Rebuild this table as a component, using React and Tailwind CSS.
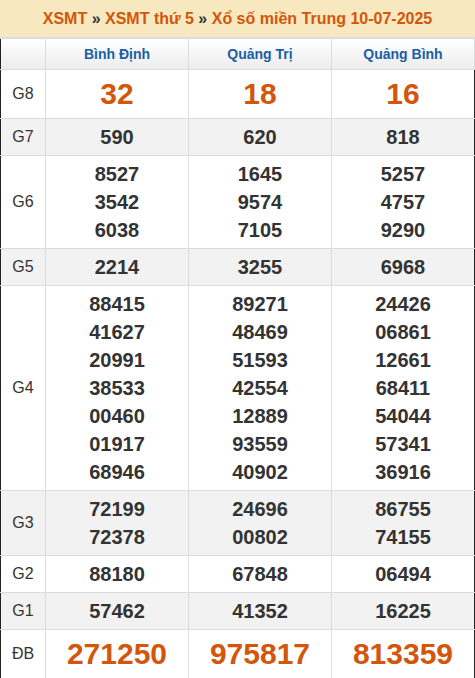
import React from 'react';

const provinces = ['Bình Định', 'Quảng Trị', 'Quảng Bình'];

const prizes = [
    { label: 'G8', big: true, values: [['32'], ['18'], ['16']] },
    { label: 'G7', values: [['590'], ['620'], ['818']] },
    { label: 'G6', values: [['8527', '3542', '6038'], ['1645', '9574', '7105'], ['5257', '4757', '9290']] },
    { label: 'G5', values: [['2214'], ['3255'], ['6968']] },
    {
        label: 'G4',
        values: [
            ['88415', '41627', '20991', '38533', '00460', '01917', '68946'],
            ['89271', '48469', '51593', '42554', '12889', '93559', '40902'],
            ['24426', '06861', '12661', '68411', '54044', '57341', '36916'],
        ],
    },
    { label: 'G3', values: [['72199', '72378'], ['24696', '00802'], ['86755', '74155']] },
    { label: 'G2', values: [['88180'], ['67848'], ['06494']] },
    { label: 'G1', values: [['57462'], ['41352'], ['16225']] },
    { label: 'ĐB', big: true, values: [['271250'], ['975817'], ['813359']] },
];

const App = () => {
    return (
        <div className="w-[475px] bg-white font-['Liberation_Sans',Arial,sans-serif]">
            {/* Title bar */}
            <div className="h-[38px] flex items-center justify-center bg-[#f7e8bf] border-b border-[#dcdcdc]">
                <h1 className="text-[16px] font-bold text-[#d2560b]">
                    XSMT <span className="text-[#333]">»</span> XSMT thứ 5 <span className="text-[#333]">»</span> Xổ số miền Trung 10-07-2025
                </h1>
            </div>

            <table className="w-full border-collapse table-fixed border-x border-b border-x-[#222] border-b-[#222]">
                <colgroup>
                    <col className="w-[45px]" />
                    <col />
                    <col />
                    <col />
                </colgroup>
                <thead>
                    <tr className="h-[31px] bg-gradient-to-b from-white to-[#ececec]">
                        <th className="border border-[#dcdcdc] border-l-0"></th>
                        {provinces.map((p) => (
                            <th key={p} className="border border-[#dcdcdc] text-[14px] font-bold text-[#1a5ea6]">
                                {p}
                            </th>
                        ))}
                    </tr>
                </thead>
                <tbody>
                    {prizes.map((row, i) => (
                        <tr key={row.label} className={i % 2 === 1 ? 'bg-[#f2f2f2]' : 'bg-white'}>
                            <td className="border border-[#dcdcdc] border-l-0 text-center text-[16px] text-[#333]">
                                {row.label}
                            </td>
                            {row.values.map((col, j) => (
                                <td
                                    key={j}
                                    className={`border border-[#dcdcdc] text-center font-bold ${row.big ? 'py-[6px] text-[30px] leading-[36px] text-[#d2560b]' : 'py-[4px] text-[20px] leading-[28px] text-[#333]'} ${j === 2 ? 'border-r-0' : ''}`}
                                >
                                    {col.map((n) => (
                                        <div key={n}>{n}</div>
                                    ))}
                                </td>
                            ))}
                        </tr>
                    ))}
                </tbody>
            </table>
        </div>
    );
};

export default App;
